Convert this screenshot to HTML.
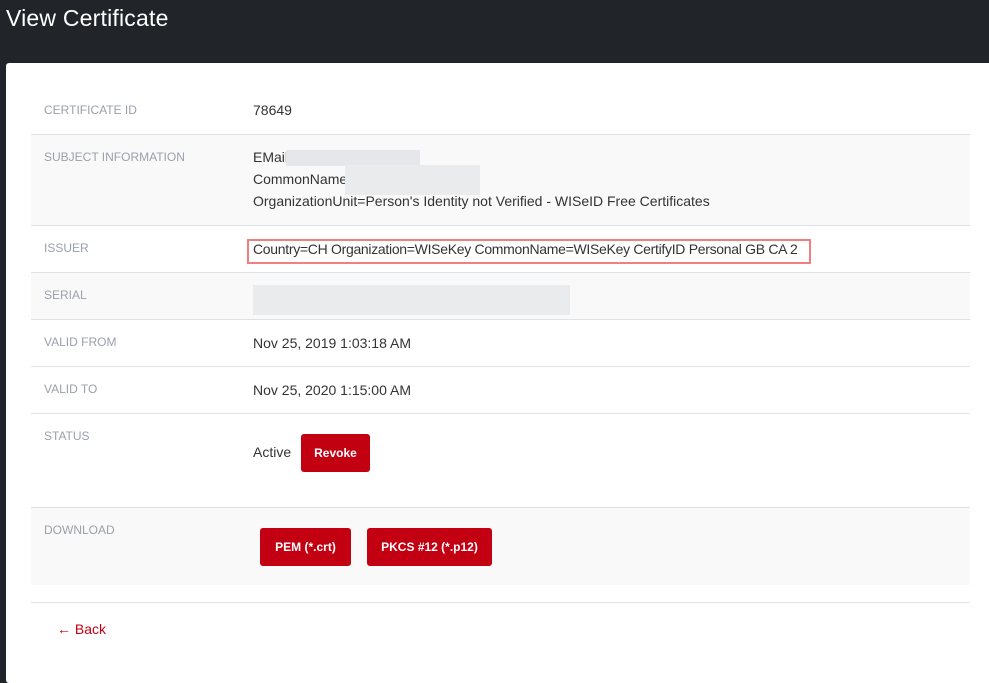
<!DOCTYPE html>
<html><head><meta charset="utf-8"><style>
*{margin:0;padding:0;box-sizing:border-box}
body{width:989px;height:676px;background:#212529;font-family:"Liberation Sans",sans-serif;position:relative;overflow:hidden}
h1{position:absolute;left:6px;top:5px;color:#fff;font-size:23px;font-weight:normal;letter-spacing:0.2px}
.card{position:absolute;left:6px;top:63px;width:990px;height:620px;background:#fff;border-radius:3px}
.row{position:absolute;left:31px;width:939px;border-top:1px solid #dee2e6}
.g{background:#f9f9f9}
.lab{position:absolute;left:44px;font-size:12px;color:#9aa0ac}
.val{position:absolute;left:253px;font-size:14px;color:#333;line-height:22px}
.btn{position:absolute;background:#c20012;color:#fff;font-size:12px;font-weight:bold;border-radius:3px;text-align:center}
.blur{position:absolute;background:#e6e7ea}
</style></head><body>
<h1>View Certificate</h1>
<div class="card"></div>
<div class="row g" style="top:134px;height:91px"></div>
<div class="row" style="top:225px;height:47px"></div>
<div class="row g" style="top:272px;height:47px"></div>
<div class="row" style="top:319px;height:47px"></div>
<div class="row" style="top:366px;height:47px"></div>
<div class="row" style="top:413px;height:94px"></div>
<div class="row g" style="top:507px;height:78px"></div>
<div class="row" style="top:602px;height:1px"></div>

<div class="lab" style="top:103px">CERTIFICATE ID</div><div class="val" style="top:99px">78649</div>
<div class="lab" style="top:150px">SUBJECT INFORMATION</div>
<div class="val" style="top:146px">EMail<br>CommonName<br>OrganizationUnit=Person's Identity not Verified - WISeID Free Certificates</div>
<div class="blur" style="left:286px;top:150px;width:134px;height:16px"></div>
<div class="blur" style="left:345px;top:165px;width:135px;height:30px;background:#eaebed"></div>
<div class="lab" style="top:241px">ISSUER</div>
<div class="val" style="top:238px;letter-spacing:-0.3px">Country=CH Organization=WISeKey CommonName=WISeKey CertifyID Personal GB CA 2</div>
<div style="position:absolute;left:247px;top:239px;width:564px;height:25px;border:2px solid #f08080"></div>
<div class="lab" style="top:288px">SERIAL</div>
<div class="blur" style="left:253px;top:285px;width:317px;height:30px;background:#eaebed"></div>
<div class="lab" style="top:335px">VALID FROM</div><div class="val" style="top:332px">Nov 25, 2019 1:03:18 AM</div>
<div class="lab" style="top:382px">VALID TO</div><div class="val" style="top:379px">Nov 25, 2020 1:15:00 AM</div>
<div class="lab" style="top:429px">STATUS</div><div class="val" style="top:441px">Active</div>
<div class="btn" style="left:301px;top:434px;width:69px;height:38px;line-height:38px">Revoke</div>
<div class="lab" style="top:523px">DOWNLOAD</div>
<div class="btn" style="left:260px;top:528px;width:91px;height:38px;line-height:38px">PEM (*.crt)</div>
<div class="btn" style="left:367px;top:528px;width:125px;height:38px;line-height:38px">PKCS #12 (*.p12)</div>
<div style="position:absolute;left:57px;top:621px;color:#c20012;font-size:14px">&#8592; Back</div>
</body></html>
